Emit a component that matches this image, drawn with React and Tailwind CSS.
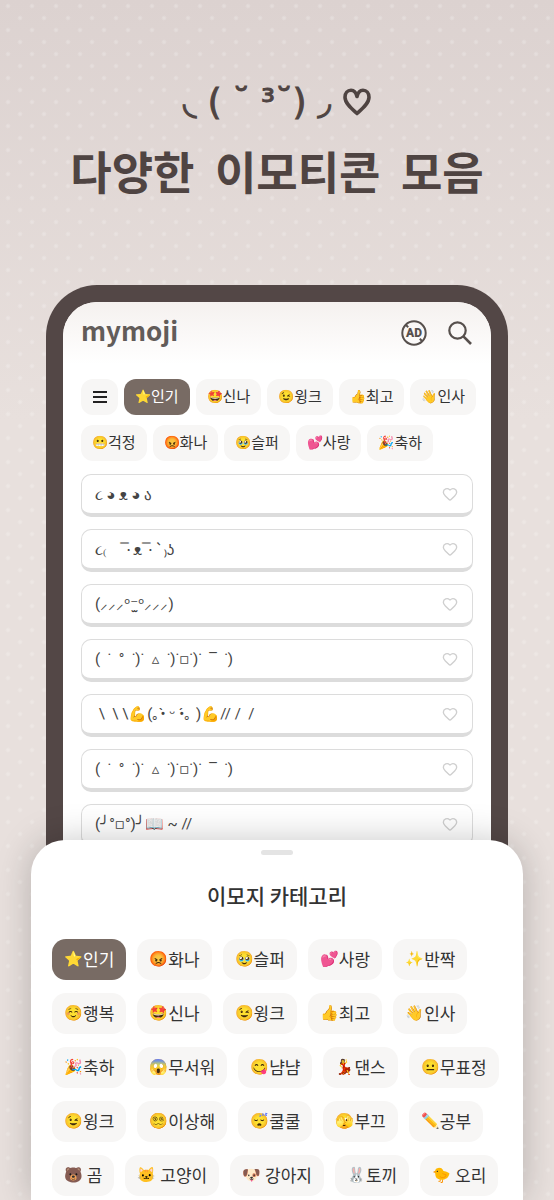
import React from 'react';
import { Heart } from 'lucide-react';
import clsx from 'clsx';

const quickCategories = [
  [
    { emoji: '⭐', label: '인기', active: true },
    { emoji: '🤩', label: '신나' },
    { emoji: '😉', label: '윙크' },
    { emoji: '👍', label: '최고' },
    { emoji: '👋', label: '인사' },
  ],
  [
    { emoji: '😬', label: '걱정' },
    { emoji: '😡', label: '화나' },
    { emoji: '🥹', label: '슬퍼' },
    { emoji: '💕', label: '사랑' },
    { emoji: '🎉', label: '축하' },
  ],
];

const allCategories = [
  [
    { emoji: '⭐', label: '인기', active: true },
    { emoji: '😡', label: '화나' },
    { emoji: '🥹', label: '슬퍼' },
    { emoji: '💕', label: '사랑' },
    { emoji: '✨', label: '반짝' },
  ],
  [
    { emoji: '☺️', label: '행복' },
    { emoji: '🤩', label: '신나' },
    { emoji: '😉', label: '윙크' },
    { emoji: '👍', label: '최고' },
    { emoji: '👋', label: '인사' },
  ],
  [
    { emoji: '🎉', label: '축하' },
    { emoji: '😱', label: '무서워' },
    { emoji: '😋', label: '냠냠' },
    { emoji: '💃', label: '댄스' },
    { emoji: '😐', label: '무표정' },
  ],
  [
    { emoji: '😉', label: '윙크' },
    { emoji: '😵‍💫', label: '이상해' },
    { emoji: '😴', label: '쿨쿨' },
    { emoji: '🫣', label: '부끄' },
    { emoji: '✏️', label: '공부' },
  ],
  [
    { emoji: '🐻', label: ' 곰' },
    { emoji: '🐱', label: ' 고양이' },
    { emoji: '🐶', label: ' 강아지' },
    { emoji: '🐰', label: '토끼' },
    { emoji: '🐤', label: ' 오리' },
  ],
];

const cjk = "font-['Noto_Sans_CJK_KR',sans-serif]";
const roboto = "font-['Roboto','DejaVu_Sans',sans-serif]";

const emoticons = [
  { text: '૮ ◕ ᴥ ◕ ა', font: cjk },
  { text: '૮₍ ⠀ ̿·ᴥ ̿·`₎ʖ', font: cjk },
  { text: '(⸝⸝⸝ᵒ⁻̫ᵒ⸝⸝⸝)', font: roboto },
  { text: '(  ˙  °  ˙)˙  ▵  ˙)˙▫˙)˙  ‾  ˙)', font: roboto },
  { text: ' \\  \\ \\💪(｡•̀ ᵕ •́｡ )💪// /  /', font: roboto },
  { text: '(  ˙  °  ˙)˙  ▵  ˙)˙▫˙)˙  ‾  ˙)', font: roboto },
  { text: '(╯°▫°)╯📖 ~ //', font: roboto },
];

const Chip = ({ emoji, label, active, large }) => (
  <button
    type="button"
    className={clsx(
      'flex shrink-0 items-center pb-[2px] whitespace-pre',
      large ? 'h-[41px] rounded-[14px] px-3 text-[17px]' : 'h-9 rounded-xl px-[11px] text-[15px]',
      active ? 'bg-[#786b64] text-white' : 'bg-[#f7f6f5] text-[#333]'
    )}
  >
    <span className={large ? 'text-[15px]' : 'text-[13px]'}>{emoji}</span>
    <span>{label}</span>
  </button>
);

const NoAdsIcon = () => (
  <svg viewBox="0 0 26 26" className="size-[26px]" fill="none" stroke="#57504d" strokeWidth="2">
    <circle cx="13" cy="13" r="11.7" />
    <path d="M4.5 4.5l2.700 2.700M18.800 18.800l2.700 2.700" />
    <text
      x="13"
      y="17.2"
      textAnchor="middle"
      fill="#57504d"
      stroke="none"
      className="font-['Roboto',sans-serif] text-[12px] font-black"
    >
      AD
    </text>
  </svg>
);

const SearchIcon = () => (
  <svg viewBox="0 0 26 26" className="size-[26px]" fill="none" stroke="#57504d" strokeWidth="2.2">
    <circle cx="10.5" cy="10.5" r="8.2" />
    <path d="M16.4 16.4l7.6 7.6" strokeWidth="2.6" />
  </svg>
);

const MenuIcon = () => (
  <svg viewBox="0 0 14 14" className="size-[14px]" stroke="#222" strokeWidth="2">
    <path d="M0 2h14M0 7h14M0 12h14" />
  </svg>
);

const TitleHeart = () => (
  <svg viewBox="0 0 28 28" className="ml-3 size-7" fill="none" stroke="currentColor" strokeWidth="3.6" strokeLinejoin="round">
    <path d="M14 25.5C9 21 2 15.5 2 9.2C2 5 4.6 2.2 8 2.2C11 2.2 13 4.2 14 8.5C15 4.2 17 2.2 20 2.2C23.4 2.2 26 5 26 9.2C26 15.5 19 21 14 25.5Z" />
  </svg>
);

const EmoticonRow = ({ text, font }) => (
  <li className="flex h-[43px] items-center justify-between rounded-[10px] border border-b-4 border-[#dcdcdc] bg-white pr-[14px] pl-[13px]">
    <span className={clsx('text-[15px] leading-5 whitespace-pre text-[#444]', font)}>{text}</span>
    <button type="button" aria-label="즐겨찾기">
      <Heart className="size-4 text-[#cfcfcf]" strokeWidth={2} />
    </button>
  </li>
);

const Phone = () => (
  <section className="mx-[46px] h-[620px] overflow-hidden rounded-t-[51px] border-[17px] border-b-0 border-[#534746] bg-white">
    <header className="flex h-[62px] items-center justify-between bg-linear-to-b from-[#f5f1ef] to-white px-[18px]">
      <h2 className="pb-[6px] text-[26px] leading-8 font-bold text-[#625c59]">mymoji</h2>
      <div className="flex items-center gap-5">
        <button type="button" aria-label="광고 제거">
          <NoAdsIcon />
        </button>
        <button type="button" aria-label="검색">
          <SearchIcon />
        </button>
      </div>
    </header>

    <nav className="mt-[15px] flex flex-col gap-[10px] pl-[18px]">
      {quickCategories.map((row, i) => (
        <div key={i} className="flex gap-[6px]">
          {i === 0 && (
            <button
              type="button"
              aria-label="메뉴"
              className="flex h-9 w-[37px] shrink-0 items-center justify-center rounded-xl bg-[#f7f6f5]"
            >
              <MenuIcon />
            </button>
          )}
          {row.map((item) => (
            <Chip key={item.label} {...item} />
          ))}
        </div>
      ))}
    </nav>

    <ul className="mt-[13px] flex flex-col gap-3 px-[18px]">
      {emoticons.map((item, i) => (
        <EmoticonRow key={i} {...item} />
      ))}
    </ul>
  </section>
);

const CategorySheet = () => (
  <section className="relative z-10 mx-[31px] -mt-[65px] rounded-t-[34px] bg-white pb-1 shadow-[0_0_36px_rgba(0,0,0,0.22)]">
    <div className="flex justify-center pt-[10px]">
      <div className="h-[5px] w-8 rounded-full bg-[#e4e4e4]" />
    </div>
    <h3 className="mt-6 text-center text-[21px] leading-8 font-medium text-[#333]">이모지 카테고리</h3>
    <div className="mt-7 flex flex-col gap-[13px] pl-[21px]">
      {allCategories.map((row, i) => (
        <div key={i} className="flex gap-[11px]">
          {row.map((item) => (
            <Chip key={item.label} {...item} large />
          ))}
        </div>
      ))}
    </div>
  </section>
);

const App = () => {
  return (
    <main className="min-h-screen overflow-hidden bg-[radial-gradient(circle_at_8px_6px,#ffffff38_1px,transparent_3px),radial-gradient(circle_at_20px_18px,#ffffff38_1px,transparent_3px),linear-gradient(to_bottom,#dcd2d0,#e8e0dd_35%,#e8e0dd)] bg-[size:24px_24px,24px_24px,100%_100%] font-['Noto_Sans_CJK_KR',sans-serif]">
      <div className="flex h-[285px] flex-col items-center pt-[80px] text-[#4f4442]">
        <p className="flex h-11 items-center font-['DejaVu_Sans',sans-serif] text-[35px] leading-none whitespace-pre [-webkit-text-stroke:1px_#4f4442]">
          <span>◟ ( ˘ ³˘) ◞</span>
          <TitleHeart />
        </p>
        <h1 className="mt-[13px] text-[45px] leading-[68px] font-bold whitespace-pre">다양한  이모티콘  모음</h1>
      </div>
      <Phone />
      <CategorySheet />
    </main>
  );
};

export default App;
